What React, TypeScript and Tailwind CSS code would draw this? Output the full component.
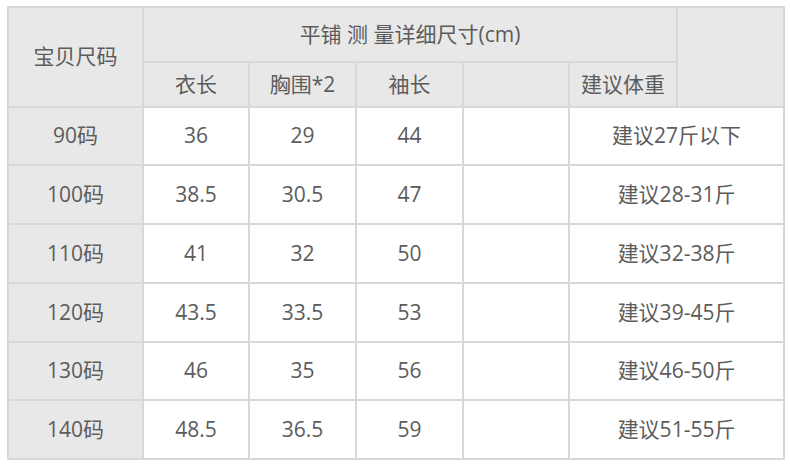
import React from "react";

const rows = [
  ["90码", "36", "29", "44", "建议27斤以下", "h-[58px]"],
  ["100码", "38.5", "30.5", "47", "建议28-31斤", "h-[59px]"],
  ["110码", "41", "32", "50", "建议32-38斤", "h-[59px]"],
  ["120码", "43.5", "33.5", "53", "建议39-45斤", "h-[59px]"],
  ["130码", "46", "35", "56", "建议46-50斤", "h-[58px]"],
  ["140码", "48.5", "36.5", "59", "建议51-55斤", "h-[59px]"],
];

const cell = "border-2 border-[#d8d8d8] text-center align-middle p-0";

export default function App() {
  return (
    <div
      className="w-[790px] h-[471px] bg-white pt-[6px] pl-[7px] text-[21px] text-[#5c5c5c]"
      style={{ fontFamily: '"Open Sans", "Noto Sans CJK SC", sans-serif' }}
    >
      <table className="table-fixed border-collapse w-[776px]">
        <colgroup>
          <col className="w-[135px]" />
          <col className="w-[106px]" />
          <col className="w-[107px]" />
          <col className="w-[107px]" />
          <col className="w-[106px]" />
          <col className="w-[108px]" />
          <col className="w-[107px]" />
        </colgroup>
        <thead>
          <tr className="h-[55px] bg-[#e9e8e8]">
            <th rowSpan={2} className={`${cell} font-normal`}>
              宝贝尺码
            </th>
            <th colSpan={5} className={`${cell} font-normal`}>
              平铺 测 量详细尺寸(cm)
            </th>
            <th rowSpan={2} className={`${cell} font-normal`}></th>
          </tr>
          <tr className="h-[45px] bg-[#e9e8e8]">
            <th className={`${cell} font-normal`}>衣长</th>
            <th className={`${cell} font-normal`}>胸围*2</th>
            <th className={`${cell} font-normal`}>袖长</th>
            <th className={`${cell} font-normal`}></th>
            <th className={`${cell} font-normal`}>建议体重</th>
          </tr>
        </thead>
        <tbody>
          {rows.map((r, i) => (
            <tr key={i} className={r[5]}>
              <td className={`${cell} bg-[#e9e8e8]`}>{r[0]}</td>
              <td className={cell}>{r[1]}</td>
              <td className={cell}>{r[2]}</td>
              <td className={cell}>{r[3]}</td>
              <td className={cell}></td>
              <td colSpan={2} className={cell}>
                {r[4]}
              </td>
            </tr>
          ))}
        </tbody>
      </table>
    </div>
  );
}
